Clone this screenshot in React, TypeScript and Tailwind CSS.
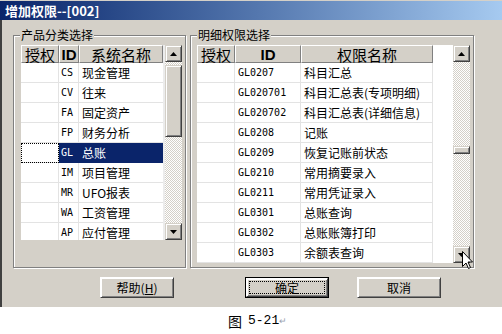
import React from 'react';

interface Row {
  id: string;
  name: string;
}

const SYSTEMS: Row[] = [
  { id: 'CS', name: '现金管理' },
  { id: 'CV', name: '往来' },
  { id: 'FA', name: '固定资产' },
  { id: 'FP', name: '财务分析' },
  { id: 'GL', name: '总账' },
  { id: 'IM', name: '项目管理' },
  { id: 'MR', name: 'UFO报表' },
  { id: 'WA', name: '工资管理' },
  { id: 'AP', name: '应付管理' },
];

const PERMISSIONS: Row[] = [
  { id: 'GL0207', name: '科目汇总' },
  { id: 'GL020701', name: '科目汇总表(专项明细)' },
  { id: 'GL020702', name: '科目汇总表(详细信息)' },
  { id: 'GL0208', name: '记账' },
  { id: 'GL0209', name: '恢复记账前状态' },
  { id: 'GL0210', name: '常用摘要录入' },
  { id: 'GL0211', name: '常用凭证录入' },
  { id: 'GL0301', name: '总账查询' },
  { id: 'GL0302', name: '总账账簿打印' },
  { id: 'GL0303', name: '余额表查询' },
];

const raised =
  'bg-[#d4d0c8] border border-t-[#d4d0c8] border-l-[#d4d0c8] border-r-[#404040] border-b-[#404040] shadow-[inset_1px_1px_0_#ffffff,inset_-1px_-1px_0_#808080]';

const HeadCell: React.FC<{ className?: string; children?: React.ReactNode }> = ({ className, children }) => (
  <div
    className={`flex items-center justify-center h-[18px] bg-[#d4d0c8] border border-t-white border-l-white border-r-[#808080] border-b-[#808080] text-[15px] leading-[15px] ${className || ''}`}
  >
    {children}
  </div>
);

const ArrowButton: React.FC<{ dir: 'up' | 'down' }> = ({ dir }) => (
  <div className={`w-[17px] h-[17px] shrink-0 flex items-center justify-center ${raised}`}>
    <svg width="7" height="4" viewBox="0 0 7 4">
      <path d={dir === 'up' ? 'M3.5 0 L7 4 L0 4 Z' : 'M0 0 L7 0 L3.5 4 Z'} fill="#000" />
    </svg>
  </div>
);

const ScrollBar: React.FC<{ thumbClass: string }> = ({ thumbClass }) => (
  <div className="w-[17px] h-full flex flex-col shrink-0">
    <ArrowButton dir="up" />
    <div className="flex-1 bg-[image:repeating-conic-gradient(#d4d0c8_0%_25%,#ffffff_0%_50%)] bg-[length:2px_2px]">
      <div className={`${raised} ${thumbClass}`} />
    </div>
    <ArrowButton dir="down" />
  </div>
);

const GroupBox: React.FC<{ title: string; className: string; children: React.ReactNode }> = ({
  title,
  className,
  children,
}) => (
  <fieldset
    className={`h-[241px] border border-[#808080] shadow-[1px_1px_0_#ffffff,inset_1px_1px_0_#ffffff] ${className}`}
  >
    <legend className="ml-[6px] px-[1px] text-[12px] leading-[16px] bg-[#d4d0c8]">{title}</legend>
    {children}
  </fieldset>
);

const SystemGrid: React.FC = () => (
  <div className="ml-[7px] mt-[2px] flex h-[195px] w-[161px] overflow-hidden">
    <div className="w-[142px] bg-white">
      <div className="flex h-[18px]">
        <HeadCell className="w-[38px]">授权</HeadCell>
        <HeadCell className="w-[20px] font-bold font-['Liberation_Sans',sans-serif]">ID</HeadCell>
        <HeadCell className="w-[84px]">系统名称</HeadCell>
      </div>
      {SYSTEMS.map((s) => {
        const sel = s.id === 'GL';
        return (
          <div key={s.id} className="flex h-[20px] text-[12px]">
            <div
              className={`w-[38px] border-r border-b border-[#e3e3e3] ${
                sel ? 'outline outline-1 outline-dotted outline-black -outline-offset-1' : ''
              }`}
            />
            <div
              className={`w-[20px] pl-[2px] flex items-center border-r border-b font-['DejaVu_Sans_Mono',monospace] text-[10px] ${
                sel ? 'bg-[#0a246a] text-white border-[#0a246a]' : 'border-[#e3e3e3]'
              }`}
            >
              {s.id}
            </div>
            <div
              className={`w-[84px] pl-[3px] flex items-center border-b ${
                sel ? 'bg-[#0a246a] text-white border-[#0a246a]' : 'border-[#e3e3e3]'
              }`}
            >
              {s.name}
            </div>
          </div>
        );
      })}
    </div>
    <div className="w-[2px] bg-[#ececec]" />
    <ScrollBar thumbClass="mt-[3px] h-[72px]" />
  </div>
);

const PermissionGrid: React.FC = () => (
  <div className="ml-[6px] mt-[2px] flex h-[218px] w-[273px] overflow-hidden">
    <div className="w-[256px] bg-white">
      <div className="flex h-[18px]">
        <HeadCell className="w-[38px]">授权</HeadCell>
        <HeadCell className="w-[66px] font-bold font-['Liberation_Sans',sans-serif]">ID</HeadCell>
        <HeadCell className="w-[132px]">权限名称</HeadCell>
        <div className="w-[20px] bg-white" />
      </div>
      {PERMISSIONS.map((p) => (
        <div key={p.id} className="flex h-[20px] text-[12px]">
          <div className="w-[38px] border-r border-b border-[#e3e3e3]" />
          <div className="w-[66px] pl-[3px] flex items-center border-r border-b border-[#e3e3e3] font-['DejaVu_Sans_Mono',monospace] text-[10px]">
            {p.id}
          </div>
          <div className="w-[132px] pl-[3px] flex items-center border-r border-b border-[#e3e3e3] whitespace-nowrap">
            {p.name}
          </div>
          <div className="w-[20px]" />
        </div>
      ))}
    </div>
    <ScrollBar thumbClass="mt-[84px] h-[8px]" />
  </div>
);

const DialogButton: React.FC<{ className: string; isDefault?: boolean; children: React.ReactNode }> = ({
  className,
  isDefault,
  children,
}) => (
  <div className={`h-[21px] text-[12px] ${isDefault ? 'border border-black' : ''} ${className}`}>
    <div className={`h-full w-full flex items-center justify-center ${isDefault ? 'p-[2px]' : ''} ${raised} border-t-white border-l-white shadow-[inset_-1px_-1px_0_#808080]`}>
      {isDefault ? (
        <div className="h-full w-full flex items-center justify-center border border-dotted border-black">
          {children}
        </div>
      ) : (
        children
      )}
    </div>
  </div>
);

export default function App() {
  return (
    <div className="relative w-[502px] h-[334px] overflow-hidden bg-white text-black font-['Noto_Sans_CJK_SC',sans-serif]">
      {/* title bar */}
      <div className="h-[20px] border-t border-[#d4d0c8] bg-linear-to-r from-[#0a246a] to-[#a6caf0] flex items-center pl-[5px]">
        <span className="text-white font-bold text-[13px] leading-none">增加权限--[002]</span>
      </div>

      {/* dialog body */}
      <div className="h-[287px] bg-[#d4d0c8] border-l-2 border-[#404040] flex flex-col">
        <div className="flex gap-[4px] pl-[11px] mt-[7px]">
          <GroupBox title="产品分类选择" className="w-[173px]">
            <SystemGrid />
          </GroupBox>
          <GroupBox title="明细权限选择" className="w-[284px]">
            <PermissionGrid />
          </GroupBox>
        </div>

        <div className="flex mt-[9px] pl-[98px]">
          <DialogButton className="w-[74px]">
            帮助(<span className="underline">H</span>)
          </DialogButton>
          <DialogButton className="w-[84px] ml-[71px]" isDefault>
            确定
          </DialogButton>
          <DialogButton className="w-[84px] ml-[28px]">取消</DialogButton>
        </div>
      </div>

      {/* caption */}
      <div className="flex items-center h-[27px] pl-[228px]">
        <span className="text-[14px] leading-none">图</span>
        <span className="ml-[6px] text-[13px] leading-none font-['Liberation_Mono',monospace]">5-21</span>
        <span className="text-[9px] leading-none text-gray-400">↵</span>
      </div>

      {/* mouse pointer over the scroll button */}
      <svg className="absolute left-[462px] top-[251px]" width="12" height="19" viewBox="0 0 12 19">
        <path
          d="M0.5 0.5 L0.5 15.5 L4 12 L6.5 17.5 L8.5 16.5 L6 11 L10.5 11 Z"
          fill="#ffffff"
          stroke="#000000"
          strokeWidth="1"
        />
      </svg>
    </div>
  );
}
